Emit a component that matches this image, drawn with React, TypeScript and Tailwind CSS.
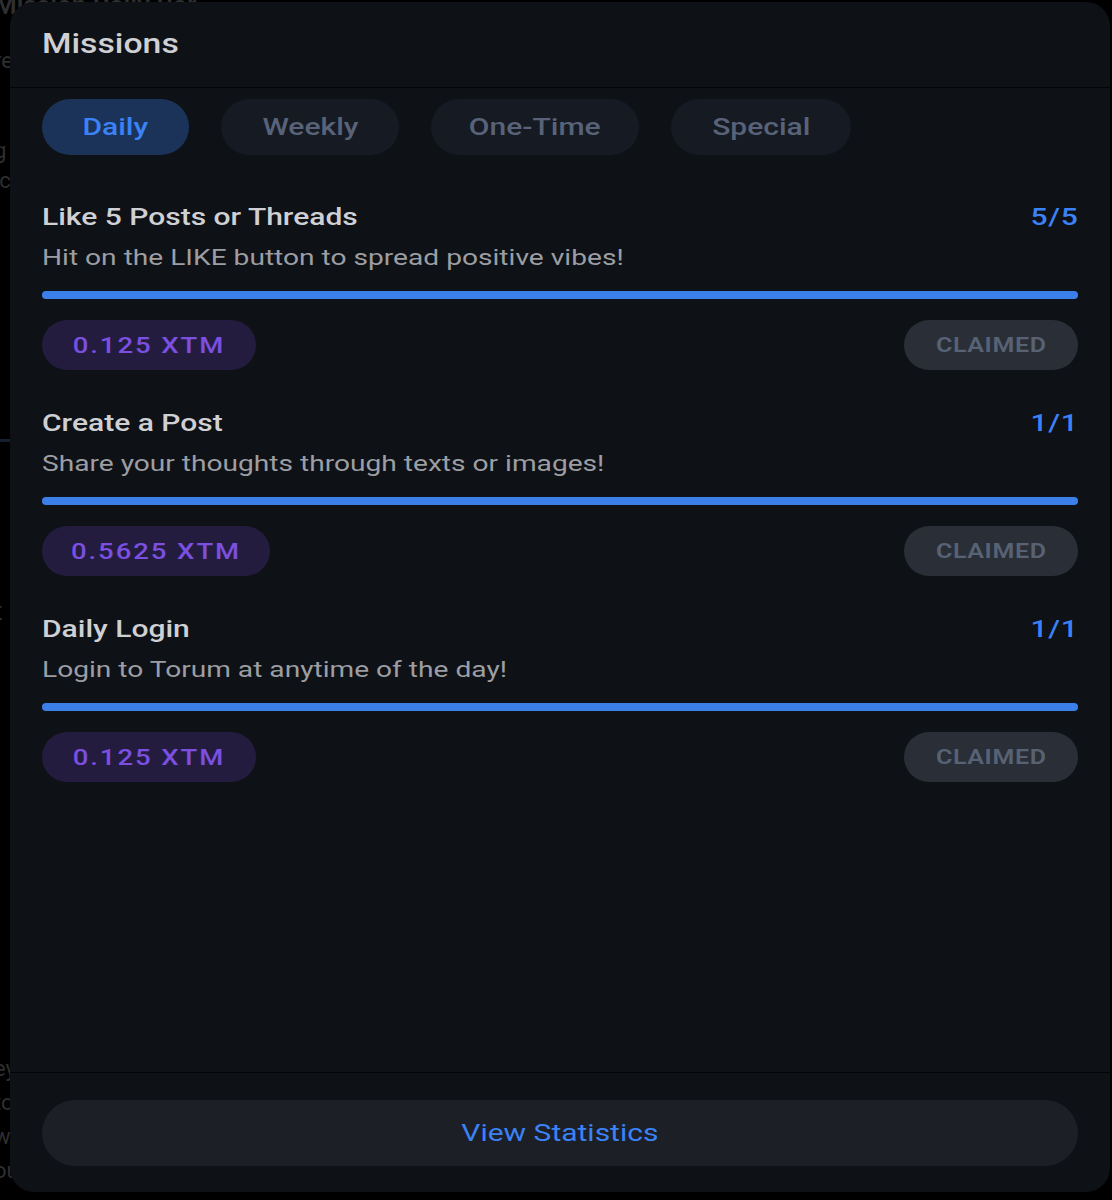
import React from "react";

type Mission = {
  title: string;
  desc: string;
  done: number;
  total: number;
  reward: string;
};

const missions: Mission[] = [
  {
    title: "Like 5 Posts or Threads",
    desc: "Hit on the LIKE button to spread positive vibes!",
    done: 5,
    total: 5,
    reward: "0.125 XTM",
  },
  {
    title: "Create a Post",
    desc: "Share your thoughts through texts or images!",
    done: 1,
    total: 1,
    reward: "0.5625 XTM",
  },
  {
    title: "Daily Login",
    desc: "Login to Torum at anytime of the day!",
    done: 1,
    total: 1,
    reward: "0.125 XTM",
  },
];

const tabs = ["Daily", "Weekly", "One-Time", "Special"];

// the app renders its type a bit wider than stock Roboto
function Wide({ children, origin = "left" }: { children: React.ReactNode; origin?: "left" | "center" | "right" }) {
  const o = origin === "left" ? "origin-left" : origin === "right" ? "origin-right" : "origin-center";
  return <span className={`inline-block scale-x-[1.25] whitespace-nowrap ${o}`}>{children}</span>;
}

function MissionRow({ m }: { m: Mission }) {
  const pct = (m.done / m.total) * 100;
  return (
    <div className="flex flex-col">
      <div className="flex items-center justify-between h-[32px]">
        <span className="text-[24px] font-medium text-[#cfd0d3]">
          <Wide>{m.title}</Wide>
        </span>
        <span className="text-[24px] font-medium text-[#3b82f6] tracking-wide">
          <Wide origin="right">
            {m.done}/{m.total}
          </Wide>
        </span>
      </div>
      <p className="mt-[9px] h-[30px] leading-[30px] text-[22.5px] text-[#9c9ea3]">
        <Wide>{m.desc}</Wide>
      </p>
      <div className="mt-[19px] h-[8px] w-full rounded-full bg-[#1c2230]">
        <div className="h-full rounded-full bg-[#3b7fea]" style={{ width: `${pct}%` }} />
      </div>
      <div className="mt-[21px] flex items-center justify-between">
        <span className="h-[50px] flex items-center px-[46px] rounded-full bg-[#241c3e] text-[22px] font-medium tracking-[0.07em] text-[#7b4fe0]">
          <Wide origin="center">{m.reward}</Wide>
        </span>
        <span className="h-[50px] w-[174px] flex items-center justify-center rounded-full bg-[#2a2f37] text-[20px] font-semibold tracking-wide text-[#586275]">
          <Wide origin="center">CLAIMED</Wide>
        </span>
      </div>
    </div>
  );
}

export default function App() {
  return (
    <main className="relative h-[1200px] w-[1112px] overflow-hidden bg-black font-['Roboto',_'Liberation_Sans',_sans-serif]">
      {/* page behind the dialog */}
      <div className="flex flex-col text-[22px] text-[#3a3b3d] opacity-80 -ml-[6px]">
        <p className="-mt-[14px] h-[30px] text-[26px] font-semibold">Mission Daily Bar</p>
        <p className="mt-[28px] h-[30px]">re</p>
        <p className="h-[30px]">I</p>
        <p className="mt-[30px] h-[30px]">g</p>
        <p className="h-[30px]">ic</p>
        <p className="mt-[25px] h-[30px]">l</p>
        <div className="mt-[190px] h-[3px] w-[40px] bg-[#1a2740]" />
        <p className="mt-[150px] h-[30px] text-[26px]">t</p>
        <p className="mt-[430px] h-[34px]">ey</p>
        <p className="h-[34px]">to</p>
        <p className="h-[34px]">w</p>
        <p className="h-[34px]">
          ou Tube: <span className="text-[#1d3560]">https://www.youtube.com/watch?v=</span>
        </p>
      </div>

      {/* dialog */}
      <div className="absolute left-[10px] top-[2px] flex h-[1190px] w-[1100px] flex-col rounded-[24px] bg-[#0e1116]">
        <div className="flex h-[86px] items-center border-b border-[#040507] px-[32px]">
          <h1 className="text-[27px] font-medium text-[#cfd0d3]">
            <Wide>Missions</Wide>
          </h1>
        </div>

        <div className="flex-1 px-[32px]">
          <div className="mt-[11px] flex gap-[32px]">
            {tabs.map((t, i) => (
              <button
                key={t}
                className={
                  i === 0
                    ? "h-[56px] px-[47px] rounded-full bg-[#1b3358] text-[24px] font-medium text-[#3b82f6]"
                    : "h-[56px] px-[51px] rounded-full bg-[#161a22] text-[24px] font-medium text-[#586379]"
                }
              >
                <Wide origin="center">{t}</Wide>
              </button>
            ))}
          </div>

          <div className="mt-[46px] flex flex-col gap-[37px]">
            {missions.map((m) => (
              <MissionRow key={m.title} m={m} />
            ))}
          </div>
        </div>

        <div className="border-t border-[#040507] px-[32px] pt-[27px] pb-[26px]">
          <button className="h-[66px] w-full rounded-full bg-[#1c1f26] text-[24px] text-[#3b82f6]">
            <Wide origin="center">View Statistics</Wide>
          </button>
        </div>
      </div>
    </main>
  );
}
